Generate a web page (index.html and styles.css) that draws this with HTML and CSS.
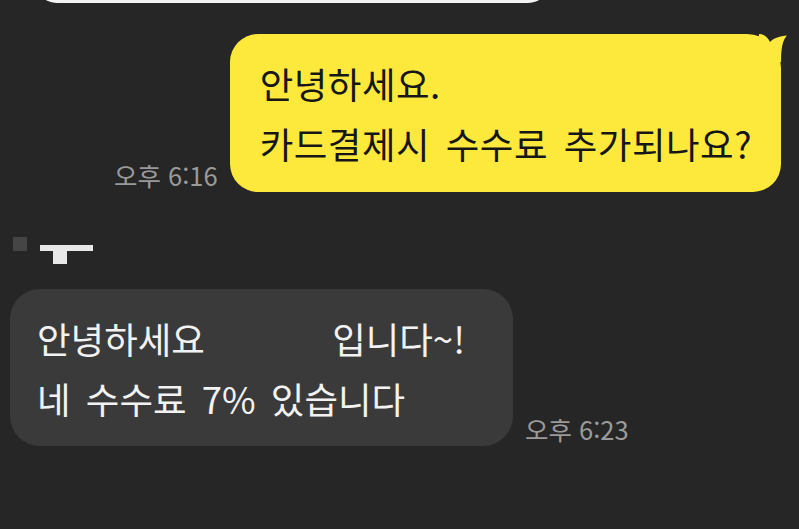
FILE: index.html
```html
<!DOCTYPE html>
<html lang="ko">
<head>
<meta charset="utf-8">
<link rel="stylesheet" href="styles.css">
</head>
<body>
<div class="chat">
  <div class="prev-bubble"></div>

  <div class="row out">
    <span class="time">오후 6:16</span>
    <div class="bubble yellow">
      <p>안녕하세요.</p>
      <p>카드결제시 수수료 추가되나요?</p>
      <svg class="tail" width="30" height="34" viewBox="0 0 30 34"><path d="M0 2 C5 2 9 5 11 10 C15 6 21 4 28 3.5 C24 8 22 14 22 30 L0 30 Z" fill="#fde93b"/></svg>
    </div>
  </div>

  <div class="sender">
    <span class="avatar"></span>
    <span class="name"><span class="bar"></span><span class="stem"></span></span>
  </div>

  <div class="row in">
    <div class="bubble gray">
      <p>안녕하세요 <span class="redact"></span>입니다~!</p>
      <p>네 수수료 7% 있습니다</p>
    </div>
    <span class="time">오후 6:23</span>
  </div>
</div>
</body>
</html>
```

FILE: styles.css
```css
html, body {
  margin: 0;
  padding: 0;
  background: #262626;
}
body {
  width: 799px;
  height: 529px;
  overflow: hidden;
  font-family: "Noto Sans CJK KR", "Noto Sans", sans-serif;
}
.chat {
  display: flex;
  flex-direction: column;
}
.prev-bubble {
  width: 515px;
  height: 40px;
  margin: -37px 0 0 35px;
  background: #f2f2f2;
  border-radius: 0 0 22px 22px;
}
.row {
  display: flex;
  align-items: flex-end;
  gap: 12px;
}
.row.out {
  justify-content: flex-end;
  padding-right: 18px;
  margin-top: 31px;
}
.row.in {
  padding-left: 10px;
  margin-top: 26px;
}
.bubble {
  position: relative;
  border-radius: 28px;
  font-size: 36.5px;
  font-weight: 400;
  line-height: 60px;
  word-spacing: 5px;
}
.bubble p {
  margin: 0;
  white-space: nowrap;
}
.yellow {
  background: #fde93b;
  color: #161616;
  padding: 20px 29px 18px 30px;
  border-top-right-radius: 34px;
  letter-spacing: 0.5px;
}
.tail {
  position: absolute;
  right: -8px;
  top: -2px;
}
.gray {
  background: #3a3a3a;
  color: #f2f2f2;
  padding: 20px 48px 17px 27px;
  border-radius: 30px;
}
.redact {
  display: inline-block;
  width: 112px;
}
.time {
  font-size: 25.5px;
  line-height: 28px;
  color: #9a9a9a;
  padding-bottom: 3px;
  white-space: nowrap;
}
.sender {
  display: flex;
  align-items: flex-start;
  gap: 13px;
  margin: 45px 0 0 13px;
  height: 26px;
}
.avatar {
  width: 14px;
  height: 14px;
  background: #454545;
}
.name {
  display: flex;
  flex-direction: column;
  align-items: flex-start;
  margin-top: 8px;
}
.bar {
  width: 53px;
  height: 6px;
  background: #e8e8e8;
}
.stem {
  width: 14px;
  height: 13px;
  margin-left: 13px;
  background: #e8e8e8;
}
```
